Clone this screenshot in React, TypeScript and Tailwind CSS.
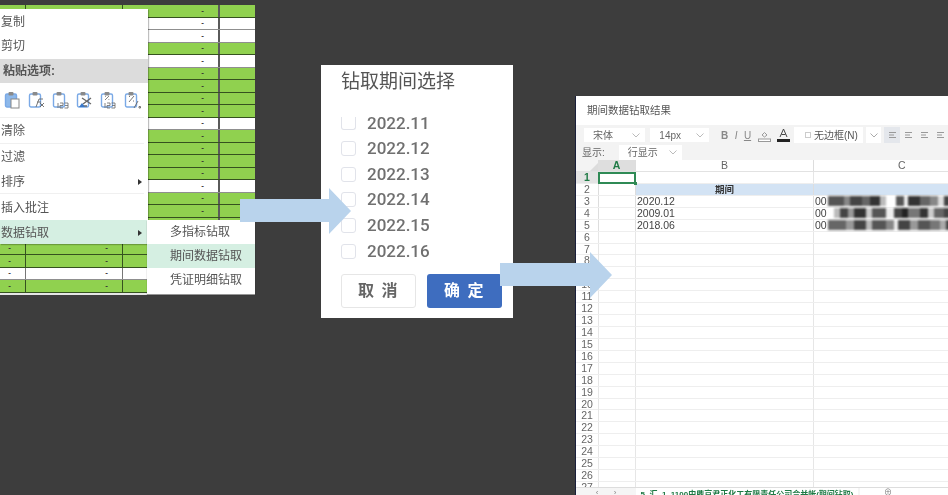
import React from "react";

const FONT = { cn: "font-['Liberation_Sans','Noto_Sans_CJK_SC',sans-serif]" };

const ROWS = "GWWGWGGGGWGGGGWGGGGGGWG".split("");

function SheetRow({ kind, idx }: { kind: string; idx: number }) {
  const green = kind === "G";
  const covered = (c: number) => (c < 2 && idx <= 18) || (c === 2 && idx >= 17);
  return (
    <div
      className={`grid h-[12.5px] grid-cols-[26px_97px_97px_35px] border-b ${
        green ? "border-[#35521f] bg-[#90d14f]" : "border-[#8f8f8f] bg-white"
      }`}
    >
      {[0, 1, 2, 3].map((c) => (
        <div
          key={c}
          className={`flex items-center justify-end pr-[14px] text-[8px] font-bold leading-none text-[#333] ${
            c < 2 ? (green ? "border-r border-[#35521f]" : "border-r border-[#777]") : c === 2 ? "border-r-2 border-[#5a5a5a]" : ""
          }`}
        >
          {c < 3 && !covered(c) ? "-" : ""}
        </div>
      ))}
    </div>
  );
}

function ClipIcon({ kind }: { kind: number }) {
  const filled = kind === 0;
  return (
    <svg width="18" height="18" viewBox="0 0 18 18" fill="none">
      <rect x="1.5" y="3" width="11" height="13" rx="1.5" fill={filled ? "#8db8ea" : "#fff"} stroke="#7aa9e6" strokeWidth="1.4" />
      <rect x="4.5" y="1" width="5" height="3.5" rx="1" fill="#8a8a8a" />
      {kind === 0 && <rect x="7" y="8" width="8" height="9" fill="#fff" stroke="#888" />}
      {kind === 1 && <path d="M8 16 L11 8 H15 M9 11 H13 M12 12 L16 16 M16 12 L12 16" stroke="#666" strokeWidth="0.9" />}
      {kind === 2 && <path d="M6 17 V12 M8 12 H11 V14.5 H8 V17 H11 M12.5 12 H16 V17 H12.5 M13 14.5 H16" stroke="#666" strokeWidth="0.8" />}
      {kind === 3 && (
        <>
          <path d="M6 7 L15 13 M15 7 L7 13 M5 15 L11 15" stroke="#666" strokeWidth="1.3" />
          <path d="M3 16 L9 16 L6 12 Z" fill="#3a78c8" />
        </>
      )}
      {kind === 4 && <path d="M5 9 L9 5 M5 5.5 h.8 M8.5 8.5 h.8 M5 17 V12 M7 12 H10 V14.5 H7 V17 H10 M11.5 12 H15 V17 H11.5 M12 14.5 H15" stroke="#666" strokeWidth="0.8" />}
      {kind === 5 && <path d="M5 11 L10 5 M5 5.5 h1 M9 10 h1 M10 17 L14 10 M15 15.5 h1.5 v1.5 h-1.5 z" stroke="#666" strokeWidth="0.9" />}
    </svg>
  );
}

function MenuItem({ label, h, arrow, className = "" }: { label: string; h: string; arrow?: boolean; className?: string }) {
  return (
    <div className={`flex items-center justify-between pl-px pr-[6px] pt-[1px] text-[12px] leading-none text-[#555] ${h} ${className}`}>
      <span>{label}</span>
      {arrow && <span className="h-0 w-0 border-y-[3px] border-l-[4px] border-y-transparent border-l-[#333]" />}
    </div>
  );
}

function Sep() {
  return <div className="mr-[4px] h-px bg-[#f0f0f0]" />;
}

function LeftSheet() {
  return (
    <div className={`absolute left-0 top-[5px] h-[290px] w-[255px] bg-[#e6e6e6] ${FONT.cn} blur-[0.5px]`}>
      {ROWS.map((r, i) => (
        <SheetRow key={i} kind={r} idx={i} />
      ))}
      <div className="absolute left-0 top-[4px] w-[148px] bg-white shadow-[1px_1px_1px_rgba(0,0,0,0.25)]">
        <MenuItem label="复制" h="h-[24px]" />
        <MenuItem label="剪切" h="h-[24px]" />
        <div className="mt-[2px] flex h-[24px] items-center bg-[#dcdcdc] pl-[3px] text-[12px] font-bold text-[#555]">粘贴选项:</div>
        <div className="flex h-[34px] items-center gap-[6px] pl-[4px]">
          {[0, 1, 2, 3, 4, 5].map((k) => (
            <ClipIcon key={k} kind={k} />
          ))}
        </div>
        <Sep />
        <MenuItem label="清除" h="h-[25px]" />
        <Sep />
        <MenuItem label="过滤" h="h-[25px]" />
        <MenuItem label="排序" h="h-[24px]" arrow />
        <Sep />
        <MenuItem label="插入批注" h="h-[26px]" />
        <MenuItem label="数据钻取" h="h-[24px]" arrow className="bg-[#d5efe2]" />
      </div>
      <div className="absolute left-[147px] top-[215px] w-[108px] bg-white pb-[2px] shadow-[0_1px_1px_rgba(0,0,0,0.35)]">
        {["多指标钻取", "期间数据钻取", "凭证明细钻取"].map((t, i) => (
          <div key={t} className={`flex h-[24px] items-center pl-[23px] text-[12px] text-[#555] ${i === 1 ? "bg-[#d5efe2]" : ""}`}>
            {t}
          </div>
        ))}
      </div>
    </div>
  );
}

function Arrow({ className, w }: { className: string; w: number }) {
  const headStart = w - 22;
  return (
    <svg className={className} width={w} height="46" viewBox={`0 0 ${w} 46`}>
      <path d={`M0 11 H${headStart} V0 L${w} 23 L${headStart} 46 V34 H0 Z`} fill="#b9d3ec" />
    </svg>
  );
}

function DrillDialog() {
  return (
    <div className={`absolute left-[321px] top-[65px] flex h-[253px] w-[192px] flex-col bg-white px-[20px] ${FONT.cn} blur-[0.3px]`}>
      <div className="mt-[3px] h-[28px] text-[19px] leading-[28px] text-[#555]">钻取期间选择</div>
      <div className="mt-[21px] flex h-[13px] items-end gap-[11px]">
        <span className="h-[13px] w-[15px] rounded-b-[3px] border border-t-0 border-[#e1e3ea]" />
        <span className="relative top-[6px] font-['Roboto',sans-serif] text-[17px] font-medium leading-[25px] text-[#707070]">2022.11</span>
      </div>
      <div className="mt-[6px] flex flex-col">
        {["2022.12", "2022.13", "2022.14", "2022.15", "2022.16"].map((d) => (
          <div key={d} className="flex h-[25.6px] items-center gap-[11px]">
            <span className="h-[15px] w-[15px] rounded-[3px] border border-[#e1e3ea] bg-white" />
            <span className="font-['Roboto',sans-serif] text-[17px] font-medium leading-none text-[#707070]">{d}</span>
          </div>
        ))}
      </div>
      <div className="mt-[10px] flex gap-[11px]">
        <div className="flex h-[34px] w-[75px] shrink-0 items-center justify-center rounded-[3px] border border-[#e6e6e6] text-[16px] font-bold tracking-[0.1em] whitespace-pre text-[#666]">
          取 消
        </div>
        <div className="flex h-[34px] w-[75px] shrink-0 items-center justify-center rounded-[3px] bg-[#3e6dbf] text-[16px] font-bold tracking-[0.1em] whitespace-pre text-white">
          确 定
        </div>
      </div>
    </div>
  );
}

function Select({ label, w, className = "" }: { label: string; w: string; className?: string }) {
  return (
    <div className={`flex h-[14px] items-center justify-between bg-white pl-[9px] pr-[5px] text-[10px] text-[#666] ${w} ${className}`}>
      <span>{label}</span>
      <svg width="8" height="5" viewBox="0 0 8 5" fill="none">
        <path d="M0.5 0.5 L4 4 L7.5 0.5" stroke="#bbb" />
      </svg>
    </div>
  );
}

const BLUR_ROWS: [string, number][][] = [
  [["#555", 16], ["#888", 6], ["#444", 12], ["#666", 8], ["#333", 10], ["#bbb", 6], ["#fff", 10], ["#555", 8], ["#eee", 4], ["#333", 12], ["#666", 10], ["#888", 8], ["#ddd", 6], ["#444", 8], ["#fff", 4], ["#555", 10]],
  [["#fff", 6], ["#bbb", 6], ["#444", 8], ["#999", 6], ["#333", 12], ["#ccc", 6], ["#555", 14], ["#eee", 8], ["#444", 8], ["#222", 6], ["#777", 12], ["#333", 8], ["#ccc", 6], ["#666", 10], ["#444", 8]],
  [["#666", 18], ["#999", 8], ["#444", 12], ["#bbb", 6], ["#555", 14], ["#888", 8], ["#eee", 4], ["#444", 12], ["#999", 8], ["#555", 12], ["#777", 10], ["#aaa", 6], ["#444", 8]],
];

function Redacted({ i }: { i: number }) {
  return (
    <div className="ml-[1px] flex h-[10px] flex-1 overflow-hidden blur-[0.8px]">
      {BLUR_ROWS[i].map(([c, w], k) => (
        <span key={k} className="h-full shrink-0" style={{ background: c, width: w }} />
      ))}
    </div>
  );
}

function GridRow({ n, children }: { n: number; children?: React.ReactNode }) {
  return (
    <div className="grid h-[11.93px] grid-cols-[22px_37px_178px_1fr] border-b border-[#eeeeee] text-[10.5px] leading-[11px]">
      <div className={`flex items-center justify-center font-['Liberation_Sans',sans-serif] text-[10.5px] ${n === 1 ? "bg-[#e4e4e4] font-bold text-[#1f7a45]" : "text-[#666]"}`}>{n}</div>
      {children ?? (
        <>
          <div className="border-l border-[#e6e6e6]" />
          <div className="border-l border-[#e6e6e6]" />
          <div className="border-l border-[#e6e6e6]" />
        </>
      )}
    </div>
  );
}

function DataRow({ n, v, i }: { n: number; v: string; i: number }) {
  return (
    <GridRow n={n}>
      <div className="border-l border-[#ddd]" />
      <div className="border-l border-[#ddd] pl-px font-['Liberation_Sans',sans-serif] text-[#444]">{v}</div>
      <div className="flex items-center border-l border-[#ddd] pl-px font-['Liberation_Sans',sans-serif] text-[#444]">
        <span>00</span>
        <Redacted i={i} />
      </div>
    </GridRow>
  );
}

function ResultWindow() {
  const rest = Array.from({ length: 22 }, (_, i) => i + 6);
  return (
    <div className={`absolute left-[575px] top-[96px] flex h-[399px] w-[373px] flex-col overflow-hidden border-l border-[#1a1f3a] bg-[#f3f3f3] ${FONT.cn} blur-[0.3px]`}>
      <div className="flex h-[29px] shrink-0 items-center bg-white pl-[11px] pt-[1px] text-[10.5px] text-[#555]">期间数据钻取结果</div>
      <div className="flex h-[20px] shrink-0 items-center pl-[8px]">
        <Select label="宋体" w="w-[66px]" />
        <Select label="14px" w="w-[63px]" className="ml-[5px]" />
        <div className="ml-[12px] flex w-[69px] shrink-0 items-center justify-between text-[10px] text-[#888]">
          <span className="font-bold">B</span>
          <span className="italic">I</span>
          <span className="underline">U</span>
          <svg width="13" height="13" viewBox="0 0 13 13" fill="none">
            <path d="M4 6 L6.5 3.5 L9 6 L6.5 8 Z" stroke="#999" />
            <rect x="0.5" y="10" width="12" height="2.5" fill="#fff" stroke="#999" />
          </svg>
          <svg width="13" height="14" viewBox="0 0 13 14" fill="none">
            <path d="M3 9 L6.5 1 L10 9 M4.5 6.5 H8.5" stroke="#444" />
            <rect x="0" y="11" width="13" height="3" fill="#222" />
          </svg>
        </div>
        <div className="ml-[4px] flex h-[16px] w-[69px] shrink-0 items-center gap-[3px] bg-white pl-[11px] text-[10px] text-[#555]">
          <span className="h-[6px] w-[6px] shrink-0 border border-dashed border-[#ccc]" />
          <span className="whitespace-nowrap">无边框(N)</span>
        </div>
        <div className="ml-[3px] flex h-[16px] w-[15px] shrink-0 items-center justify-center bg-white">
          <svg width="8" height="5" viewBox="0 0 8 5" fill="none">
            <path d="M0.5 0.5 L4 4 L7.5 0.5" stroke="#aaa" />
          </svg>
        </div>
        <div className="ml-[3px] flex items-center">
          {[0, 1, 2, 3].map((k) => (
            <div key={k} className={`flex h-[16px] w-[16px] shrink-0 items-center justify-center ${k === 0 ? "bg-[#e4e7ec]" : ""}`}>
              <svg width="9" height="9" viewBox="0 0 9 9" stroke="#999">
                <path d="M1 1.5 H8 M1 4 H6 M1 6.5 H8" />
              </svg>
            </div>
          ))}
        </div>
      </div>
      <div className="flex h-[15px] shrink-0 items-center pl-[6px] text-[10px] text-[#666]">
        <span>显示:</span>
        <Select label="行显示" w="w-[63px]" className="ml-[14px] !h-[15px]" />
      </div>
      <div className="flex min-h-0 flex-1 flex-col bg-white">
        <div className="grid h-[12px] shrink-0 grid-cols-[22px_37px_178px_1fr] border-b border-[#e2e2e2] font-['Liberation_Sans',sans-serif] text-[10.5px] leading-[11px] text-[#666]">
          <div className="flex items-end justify-end bg-[#f3f3f3]">
            <svg width="8" height="8" viewBox="0 0 8 8">
              <path d="M8 0 V8 H0 Z" fill="#dcdcdc" />
            </svg>
          </div>
          <div className="bg-[#dedede] text-center font-bold text-[#1f7a45]">A</div>
          <div className="border-l border-[#ddd] bg-white text-center">B</div>
          <div className="border-l border-[#ddd] bg-white pl-[84px]">C</div>
        </div>
        <div className="relative min-h-0 flex-1 overflow-hidden">
          <GridRow n={1} />
          <GridRow n={2}>
            <div className="border-l border-[#ddd]" />
            <div className="border-l border-[#ddd] bg-[#d3e3f4] text-center text-[9.5px] font-bold text-[#333]">期间</div>
            <div className="border-l border-[#ddd] bg-[#d3e3f4]" />
          </GridRow>
          <DataRow n={3} v="2020.12" i={0} />
          <DataRow n={4} v="2009.01" i={1} />
          <DataRow n={5} v="2018.06" i={2} />
          {rest.map((n) => (
            <GridRow key={n} n={n} />
          ))}
          <div className="absolute left-[22px] top-0 h-[12px] w-[38px] border-2 border-[#2f8a55]" />
          <div className="absolute left-[58px] top-[10px] h-[3px] w-[3px] bg-[#2f8a55]" />
        </div>
        <div className="flex h-[8px] shrink-0 items-start border-t border-[#ddd] bg-[#f5f5f5] text-[8px] leading-[9px]">
          <div className="flex w-[60px] shrink-0 justify-around px-[12px] text-[#888]">
            <span>‹</span>
            <span>›</span>
          </div>
          <div className="w-[222px] shrink-0 overflow-hidden whitespace-nowrap bg-white pt-[2px] text-center font-bold text-[#1f7a45]">5_汇_1_1100中鼎京君正化工有限责任公司合并帐(期间钻取)</div>
          <div className="ml-[2px] flex-1 bg-white pl-[24px] text-[#777]">⊕</div>
        </div>
      </div>
    </div>
  );
}

export default function App() {
  return (
    <div className="relative h-[495px] w-[948px] overflow-hidden bg-[#3d3d3d]">
      <LeftSheet />
      <DrillDialog />
      <ResultWindow />
      <Arrow className="absolute left-[240px] top-[188px]" w={111} />
      <Arrow className="absolute left-[500px] top-[252px]" w={112} />
    </div>
  );
}
